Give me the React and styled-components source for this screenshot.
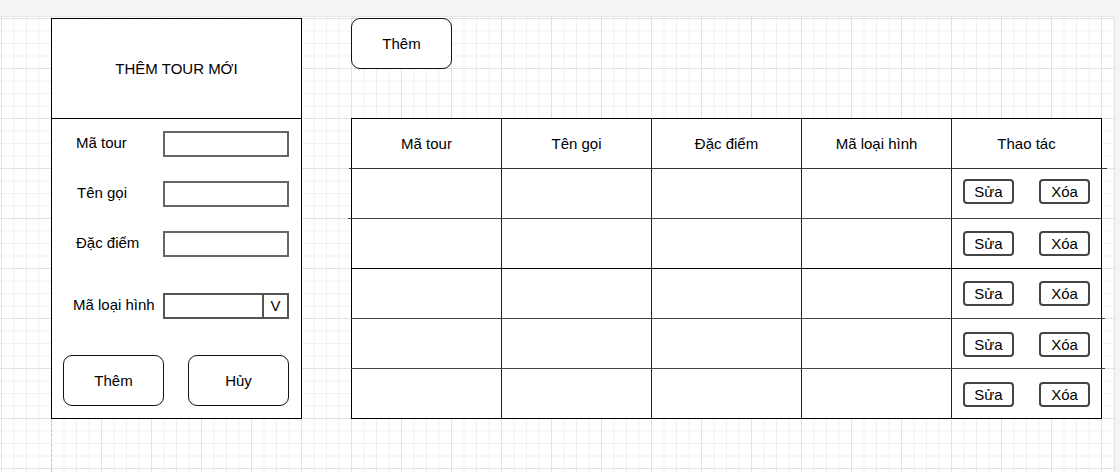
import React from 'react'
import styled, { createGlobalStyle } from 'styled-components';

const GlobalStyle = createGlobalStyle`
  html, body {
    margin: 0;
    padding: 0;
    background: #f4f5f7;
    font-family: "Liberation Sans", Arial, sans-serif;
    color: #000;
  }
  * { box-sizing: border-box; }
`;

const fields = [
    { label: "Mã tour", shift: 24 },
    { label: "Tên gọi", shift: 25 },
    { label: "Đặc điểm", shift: 24 },
];

const columns = ["Mã tour", "Tên gọi", "Đặc điểm", "Mã loại hình", "Thao tác"];

// overshoot of each line under a row, as the wireframe draws it
const rules = [
    { left: 2, right: 5, tone: "#333" },
    { left: 3, right: 0, tone: "#444" },
    { left: 0, right: 0, tone: "#000" },
    { left: 0, right: 3, tone: "#444" },
    { left: 0, right: 3, tone: "#444" },
];

// buttons in the action column don't sit exactly centred in each row
const nudges = [-2, 0, 0, 1, 1];

function App() {
    return (
        <Page>
            <GlobalStyle />
            <Canvas>
                <LeftCol>
                    <Panel>
                        <PanelHeader>THÊM TOUR MỚI</PanelHeader>
                        <PanelBody>
                            {fields.map(({ label, shift }) => (
                                <Field key={label}>
                                    <Label shift={shift}>{label}</Label>
                                    <Input />
                                </Field>
                            ))}
                            <Field spaced>
                                <Label shift={21}>Mã loại hình</Label>
                                <Select>
                                    <span />
                                    <Caret>V</Caret>
                                </Select>
                            </Field>
                            <Actions>
                                <BigButton>Thêm</BigButton>
                                <BigButton>Hủy</BigButton>
                            </Actions>
                        </PanelBody>
                    </Panel>
                    <PageBreak />
                </LeftCol>
                <RightCol>
                    <BigButton>Thêm</BigButton>
                    <Table>
                        <Row>
                            {columns.map((c, i) => (
                                <Cell key={c} first={i === 0}>{c}</Cell>
                            ))}
                        </Row>
                        {rules.map((r, idx) => (
                            <React.Fragment key={idx}>
                                <Rule left={r.left} right={r.right} tone={r.tone} />
                                <Row>
                                    <Cell first />
                                    <Cell />
                                    <Cell />
                                    <Cell />
                                    <Cell actions nudge={nudges[idx]}>
                                        <SmallButton>Sửa</SmallButton>
                                        <SmallButton>Xóa</SmallButton>
                                    </Cell>
                                </Row>
                            </React.Fragment>
                        ))}
                    </Table>
                </RightCol>
            </Canvas>
        </Page>
    )
}

const Page = styled.div`
  min-height: 100vh;
  padding-top: 17px;
  overflow: hidden;
`;

const Canvas = styled.div`
  width: 1114px;
  height: calc(100vh - 17px);
  min-height: 455px;
  background-color: #fff;
  background-image:
    linear-gradient(to right, #e2e2e2 1px, transparent 1px),
    linear-gradient(to bottom, #e2e2e2 1px, transparent 1px),
    linear-gradient(to right, #f0f0f0 1px, transparent 1px),
    linear-gradient(to bottom, #f0f0f0 1px, transparent 1px);
  background-size: 50px 50px, 50px 50px, 12.5px 12.5px, 12.5px 12.5px;
  background-position: 1px 1px;
  box-shadow: 0 0 2px rgba(0, 0, 0, 0.18);
  display: flex;
  gap: 49px;
  padding: 1px 0 0 51px;
`;

const LeftCol = styled.div`
  display: flex;
  flex-direction: column;
`;

const Panel = styled.div`
  width: 251px;
  height: 401px;
  border: 1px solid #000;
  background: #fff;
  display: flex;
  flex-direction: column;
`;

const PanelHeader = styled.div`
  height: 100px;
  border-bottom: 1px solid #000;
  display: flex;
  align-items: center;
  justify-content: center;
  font-size: 15px;
`;

const PanelBody = styled.div`
  flex: 1;
  display: flex;
  flex-direction: column;
  gap: 24px;
  padding-top: 12px;
`;

const Field = styled.div`
  display: flex;
  align-items: center;
  height: 26px;
  margin-top: ${({ spaced }) => (spaced ? "12px" : "0")};
`;

const Label = styled.span`
  width: 111px;
  padding-left: ${({ shift }) => shift}px;
  padding-bottom: 3px;
  font-size: 15px;
  white-space: nowrap;
`;

const Input = styled.div`
  width: 126px;
  height: 26px;
  border: 2px solid #666;
  background: #fff;
`;

const Select = styled.div`
  width: 126px;
  height: 26px;
  border: 2px solid #555;
  display: flex;
  span:first-child {
    flex: 1;
  }
`;

const Caret = styled.div`
  width: 25px;
  border-left: 2px solid #555;
  display: flex;
  align-items: center;
  justify-content: center;
  font-size: 15px;
  padding-bottom: 1px;
`;

const Actions = styled.div`
  display: flex;
  gap: 24px;
  padding-left: 11px;
  margin-top: 12px;
`;

const BigButton = styled.div`
  width: 101px;
  height: 51px;
  border: 1.5px solid #111;
  border-radius: 9px;
  background: #fff;
  display: flex;
  align-items: center;
  justify-content: center;
  font-size: 15px;
  padding-bottom: 1px;
`;

const PageBreak = styled.div`
  flex: 1;
  border-left: 1px dashed #c4c4c4;
`;

const RightCol = styled.div`
  display: flex;
  flex-direction: column;
  gap: 49px;
`;

const Table = styled.div`
  width: 751px;
  height: 301px;
  border: 1px solid #000;
  background: #fff;
  display: flex;
  flex-direction: column;
`;

const Row = styled.div`
  height: 49px;
  flex-shrink: 0;
  display: grid;
  grid-template-columns: 149px repeat(4, 150px);
`;

const Cell = styled.div`
  border-left: ${({ first }) => (first ? "none" : "1px solid #222")};
  display: flex;
  align-items: center;
  justify-content: ${({ actions }) => (actions ? "space-between" : "center")};
  padding: ${({ actions, nudge = 0 }) =>
    actions ? `${Math.max(nudge, 0) * 2}px 11px ${Math.max(-nudge, 0) * 2}px 11px` : "0"};
  font-size: 15px;
`;

const Rule = styled.div`
  height: 1px;
  flex-shrink: 0;
  background: ${({ tone }) => tone};
  margin-left: -${({ left }) => left + 1}px;
  margin-right: -${({ right }) => right + 1}px;
`;

const SmallButton = styled.div`
  width: 51px;
  height: 25px;
  border: 2px solid #444;
  border-radius: 4px;
  display: flex;
  align-items: center;
  justify-content: center;
  font-size: 15px;
  padding-bottom: 1px;
`;

export default App
